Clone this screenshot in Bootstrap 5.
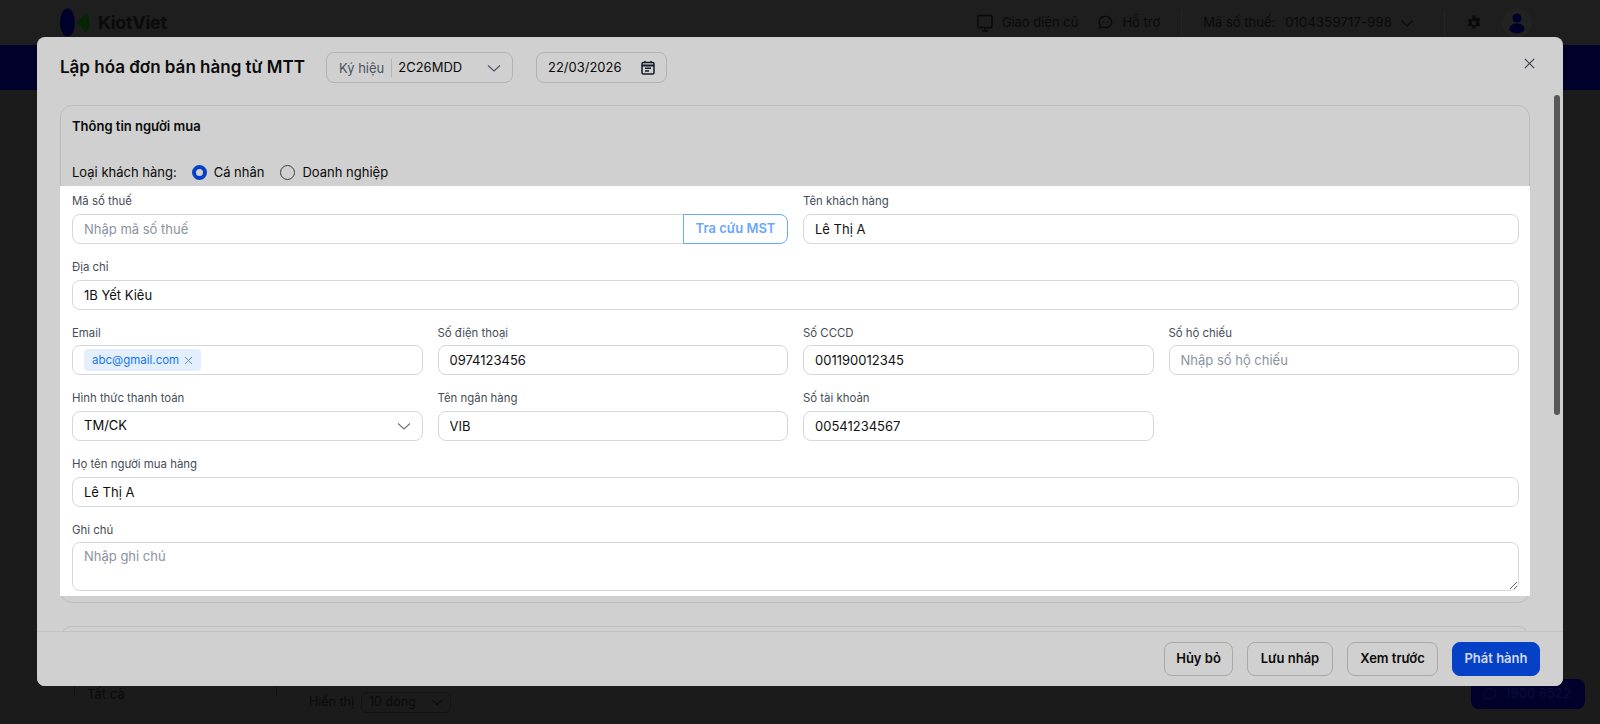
<!DOCTYPE html>
<html lang="vi">
<head>
<meta charset="utf-8">
<title>Lập hóa đơn</title>
<link href="https://cdn.jsdelivr.net/npm/bootstrap@5.3.0/dist/css/bootstrap.min.css" rel="stylesheet">
<style>
html,body{height:724px;overflow:hidden}
body{background:#1b1b1b;font-family:Inter,"Liberation Sans",sans-serif;font-size:13px;color:#0a0a0a;position:relative}
.topbar{height:45px;background:#1e1e1e;padding:0 68px 0 60px}
.brand{font-weight:700;font-size:18px;color:#0b0b0b;letter-spacing:-.3px}
.topitem{color:#0a0a0a;font-size:13px}
.vsep{width:1px;height:26px;background:#252525}
.band{height:45px;background:#00002a}
.under{position:absolute;left:0;right:0;bottom:0;height:60px;color:#0a0a0a}
.tatca{position:absolute;left:74px;top:0;width:203px;height:33px;border-left:1px solid #111;border-right:1px solid #111;padding:21px 12px 0;line-height:18px}
.show{position:absolute;left:309px;top:28px;height:20px;gap:7px;font-size:12.5px}
.showsel{border:1px solid #131313;border-radius:6px;width:90px;height:21px;padding:0 7px}
.hotline{position:absolute;left:1471px;top:15px;width:114px;height:30px;background:#00002a;border-radius:8px;color:#0b0b3a;font-weight:500;gap:8px;padding-left:12px}
.dlg{position:absolute;left:37px;top:37px;width:1526px;height:649px;background:#d0d0d0;border-radius:8px;overflow:hidden}
.dlg-head{height:61px;padding:0 24px 0 23px;gap:21px}
.dlg-title{font-size:17px;font-weight:600;color:#0b0b0b;white-space:nowrap;margin:0}
.pill{height:31px;border:1px solid #b3b3b3;border-radius:8px;background:#d0d0d0}
.kyhieu{width:187px;padding:0 12px}
.kyhieu .lbl{color:#4a5260;padding-right:7px;border-right:1px solid #b3b3b3;line-height:18px}
.kyhieu .val{padding-left:6px}
.kyhieu svg{margin-right:-1px}
.dateb{width:131px;padding:0 11px;margin-left:2px}
.closex{position:absolute;left:1487px;top:21px;line-height:0}
.sbar{position:absolute;left:1517px;top:58px;width:6px;height:320px;background:#585858;border-radius:3px}
.sect{position:absolute;left:23px;width:1470px;border:1px solid #bcbcbc;border-radius:12px}
.s1{top:68px;height:498px}
.s2{top:589px;height:60px}
.s1-head{height:80px;padding:11px 11px 0}
.s1-title{font-weight:600;font-size:13px;color:#0a0a0a;line-height:18px}
.rd{display:inline-flex;align-items:center;gap:7px}
.rd + .rd{margin-left:1px}
.rdo{width:15px;height:15px;border-radius:50%;border:1px solid #3c3c3c;display:inline-block}
.rdo.on{border:4px solid #0541c6;background:#d0d0d0}
.white{position:absolute;left:-1px;right:-1px;top:80px;height:410px;background:#fff;padding:9.4px 11px 0 12px}
.rw{--bs-gutter-x:15px;--bs-gutter-y:0}
.fld{height:65.7px}
.fld-lbl{display:block;font-size:11.4px;line-height:14px;color:#454c58;margin:-1px 0 5.5px;height:14px}
.inp.form-control{height:30px;font-size:13px;line-height:18px;padding:4px 11px;border:1px solid #d4d7dc;border-radius:8px;color:#111;box-shadow:none}
.inp.form-control::placeholder{color:#8b93a0}
.mst{border-top-right-radius:0!important;border-bottom-right-radius:0!important}
.btn-mst{width:105px;height:30px;padding:0;font-size:13px;font-weight:600;color:#6aa6ff;background:#fff;border:1px solid #6aa6ff;border-radius:0 8px 8px 0;margin-left:-1px;flex:none}
.box{height:30px;border:1px solid #d4d7dc;border-radius:8px;background:#fff;padding:0 11px}
.tag{background:#e3effd;color:#1677ee;font-size:11.5px;border-radius:4px;height:22px;padding:0 8px;gap:5px}
.txt.form-control{height:49px;font-size:13px;padding:4px 11px;border:1px solid #d4d7dc;border-radius:8px;box-shadow:none}
.txt.form-control::placeholder{color:#8b93a0}
.dlg-foot{position:absolute;left:0;right:0;bottom:0;height:55px;background:#d0d0d0;border-top:1px solid #c2c2c2;padding:0 23px 0 0;gap:14px}
.fbtn{height:34px;border:1px solid #a9a9a9;border-radius:8px;font-weight:600;font-size:13px;color:#0b0b0b;background:#d0d0d0;padding:0}
.fb1{width:69px}.fb2{width:86px}.fb3{width:91px}
.fb4{width:88px;background:#0541c6;border-color:#0541c6;color:#cfd9ef}
</style>
</head>
<body>
<div class="topbar d-flex align-items-center justify-content-between">
  <div class="d-flex align-items-center" style="gap:7px">
    <svg width="31" height="30" viewBox="0 0 31 30"><ellipse cx="7.500" cy="14.500" rx="7.500" ry="14" fill="#00002a"/><path d="M18 14.500 26.500 5.500Q30.500 14.500 26.500 24Z" fill="#052505" stroke="#052505" stroke-width="1.500" stroke-linejoin="round"/></svg>
    <span class="brand">KiotViet</span>
  </div>
  <div class="d-flex align-items-center topitem">
    <svg width="16" height="18" viewBox="0 0 16 18" fill="none" stroke="#0a0a0a" stroke-width="1.500"><rect x="1" y="1.500" width="14" height="12" rx="1"/><path d="M5 17h6M8 14v3"/></svg>
    <span style="margin-left:9px">Giao diện cũ</span>
    <svg style="margin-left:20px" width="15" height="15" viewBox="0 0 16 16" fill="none" stroke="#0a0a0a" stroke-width="1.400"><path d="M8 1.500a6.500 6 0 1 1-3 11.300L1.500 14l1-3A6.500 6 0 0 1 8 1.500z"/><path d="M5 7.500h.8M7.600 7.500h.8M10.200 7.500h.8"/></svg>
    <span style="margin-left:9px">Hỗ trợ</span>
    <span class="vsep" style="margin:0 21px"></span>
    <span>Mã số thuế:</span><span style="margin-left:10px;letter-spacing:.2px">0104359717-998</span>
    <svg class="ms-2" width="14" height="14" viewBox="0 0 14 14" fill="none" stroke="#0a0a0a" stroke-width="1.200"><path d="M1.500 4.500 7 10l5.500-5.500"/></svg>
    <span class="vsep" style="margin:0 21px 0 30px"></span>
    <svg width="16" height="18" viewBox="0 0 16 16" fill="#0a0a0a"><path fill-rule="evenodd" d="M6.600.5h2.800l.4 2 1.300.7 2-.7 1.400 2.500-1.500 1.300v1.400l1.500 1.300-1.400 2.500-2-.7-1.300.7-.4 2H6.600l-.4-2-1.300-.7-2 .7L1.500 10l1.500-1.300V7.300L1.500 6l1.400-2.500 2 .7 1.300-.7zM8 5.800a2.200 2.200 0 1 0 0 4.400 2.200 2.200 0 0 0 0-4.400z"/></svg>
    <span class="d-inline-flex align-items-center justify-content-center rounded-circle" style="margin-left:20px;width:30px;height:30px;background:#222">
      <svg width="16" height="22" viewBox="0 0 16 22" fill="#00002a"><circle cx="8" cy="6" r="4.500"/><ellipse cx="8" cy="16.500" rx="7.500" ry="5"/></svg>
    </span>
  </div>
</div>
<div class="band"></div>

<div class="under">
  <div class="tatca">Tất cả</div>
  <div class="show d-flex align-items-center">
    <span>Hiển thị</span>
    <span class="showsel d-flex align-items-center justify-content-between">10 dòng
      <svg width="12" height="12" viewBox="0 0 14 14" fill="none" stroke="#0a0a0a" stroke-width="1.300"><path d="M1.500 4.500 7 10l5.500-5.500"/></svg>
    </span>
  </div>
  <div class="hotline d-flex align-items-center">
    <svg width="14" height="14" viewBox="0 0 16 16" fill="none" stroke="#0b0b3a" stroke-width="1.400"><path d="M8 1.500a6.500 6 0 1 1-3 11.300L1.500 14l1-3A6.500 6 0 0 1 8 1.500z"/><path d="M5 7.500h.8M7.600 7.500h.8M10.200 7.500h.8"/></svg>
    <span>1900 6522</span>
  </div>
</div>

<div class="dlg">
  <div class="dlg-head d-flex align-items-center">
    <h5 class="dlg-title">Lập hóa đơn bán hàng từ MTT</h5>
    <div class="pill kyhieu d-flex align-items-center">
      <span class="lbl">Ký hiệu</span><span class="val flex-grow-1">2C26MDD</span>
      <svg width="14" height="14" viewBox="0 0 14 14" fill="none" stroke="#4a5260" stroke-width="1.100"><path d="M1 4.500 7 10l6-5.500"/></svg>
    </div>
    <div class="pill dateb d-flex align-items-center justify-content-between">
      <span>22/03/2026</span>
      <svg width="14" height="15" viewBox="0 0 14 15" fill="none" stroke="#101828" stroke-width="1.500"><rect x="1" y="2.500" width="12" height="11.500" rx="1.500"/><path d="M1 5.500h12" stroke-width="2"/><path d="M4 1v2M10 1v2M4 8.300h6M4 11h4"/></svg>
    </div>
  </div>
  <span class="closex"><svg width="11" height="11" viewBox="0 0 11 11" fill="none" stroke="#3c4454" stroke-width="1.200"><path d="M.8.800l9.400 9.400M10.200.800.800 10.200"/></svg></span>
  <div class="sect s1">
    <div class="s1-head">
      <div class="s1-title">Thông tin người mua</div>
      <div class="d-flex align-items-center" style="margin-top:28px;gap:15px">
        <span>Loại khách hàng:</span>
        <span class="rd"><span class="rdo on"></span>Cá nhân</span>
        <span class="rd"><span class="rdo"></span>Doanh nghiệp</span>
      </div>
    </div>
    <div class="white">
      <div class="row rw">
        <div class="col-6 fld">
          <label class="fld-lbl">Mã số thuế</label>
          <div class="d-flex"><input class="form-control inp mst" placeholder="Nhập mã số thuế"><button class="btn btn-mst">Tra cứu MST</button></div>
        </div>
        <div class="col-6 fld">
          <label class="fld-lbl">Tên khách hàng</label>
          <input class="form-control inp" value="Lê Thị A">
        </div>
        <div class="col-12 fld">
          <label class="fld-lbl">Địa chỉ</label>
          <input class="form-control inp" value="1B Yết Kiêu">
        </div>
        <div class="col-3 fld">
          <label class="fld-lbl">Email</label>
          <div class="box d-flex align-items-center"><span class="tag d-inline-flex align-items-center">abc@gmail.com
            <svg width="9" height="9" viewBox="0 0 9 9" fill="none" stroke="#5b8fd6" stroke-width="1"><path d="M1 1l7 7M8 1 1 8"/></svg></span></div>
        </div>
        <div class="col-3 fld">
          <label class="fld-lbl">Số điện thoại</label>
          <input class="form-control inp" value="0974123456">
        </div>
        <div class="col-3 fld">
          <label class="fld-lbl">Số CCCD</label>
          <input class="form-control inp" value="001190012345">
        </div>
        <div class="col-3 fld">
          <label class="fld-lbl">Số hộ chiếu</label>
          <input class="form-control inp" placeholder="Nhập số hộ chiếu">
        </div>
        <div class="col-3 fld">
          <label class="fld-lbl">Hình thức thanh toán</label>
          <div class="box d-flex align-items-center justify-content-between"><span>TM/CK</span>
            <svg width="14" height="14" viewBox="0 0 14 14" fill="none" stroke="#6b7280" stroke-width="1.100"><path d="M1 4.500 7 10l6-5.500"/></svg></div>
        </div>
        <div class="col-3 fld">
          <label class="fld-lbl">Tên ngân hàng</label>
          <input class="form-control inp" value="VIB">
        </div>
        <div class="col-3 fld">
          <label class="fld-lbl">Số tài khoản</label>
          <input class="form-control inp" value="00541234567">
        </div>
        <div class="col-3 fld"></div>
        <div class="col-12 fld">
          <label class="fld-lbl">Họ tên người mua hàng</label>
          <input class="form-control inp" value="Lê Thị A">
        </div>
        <div class="col-12">
          <label class="fld-lbl">Ghi chú</label>
          <textarea class="form-control txt" placeholder="Nhập ghi chú"></textarea>
        </div>
      </div>
    </div>
  </div>
  <div class="sect s2"></div>
  <div class="sbar"></div>
  <div class="dlg-foot d-flex align-items-center justify-content-end">
    <button class="btn fbtn fb1">Hủy bỏ</button>
    <button class="btn fbtn fb2">Lưu nháp</button>
    <button class="btn fbtn fb3">Xem trước</button>
    <button class="btn fbtn fb4">Phát hành</button>
  </div>
</div>
<script src="https://cdn.jsdelivr.net/npm/bootstrap@5.3.0/dist/js/bootstrap.bundle.min.js"></script>
</body>
</html>
